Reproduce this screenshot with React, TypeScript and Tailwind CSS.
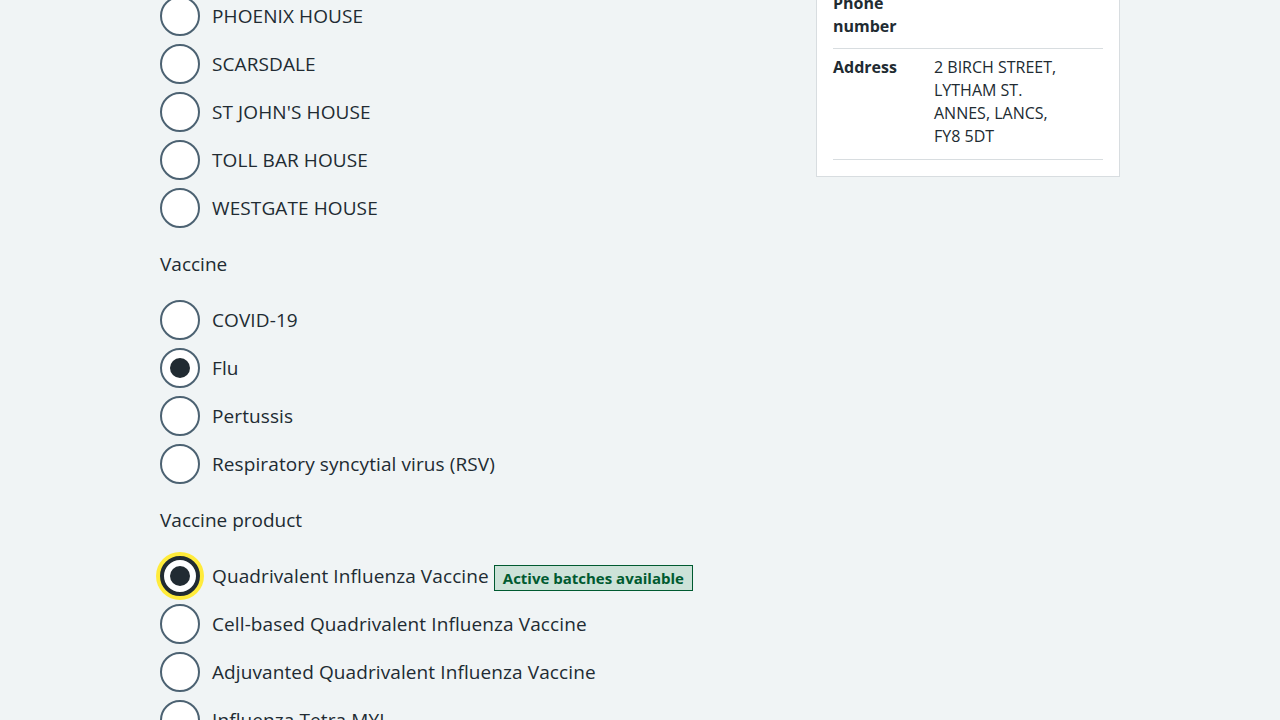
const sites = ['PHOENIX HOUSE', 'SCARSDALE', "ST JOHN'S HOUSE", 'TOLL BAR HOUSE', 'WESTGATE HOUSE'];
const vaccines = [
  { label: 'COVID-19', checked: false },
  { label: 'Flu', checked: true },
  { label: 'Pertussis', checked: false },
  { label: 'Respiratory syncytial virus (RSV)', checked: false },
];
const products = [
  'Quadrivalent Influenza Vaccine',
  'Cell-based Quadrivalent Influenza Vaccine',
  'Adjuvanted Quadrivalent Influenza Vaccine',
  'Influenza Tetra MYL',
];

function Radio({
  label,
  checked = false,
  focused = false,
  tag,
}: {
  label: string;
  checked?: boolean;
  focused?: boolean;
  tag?: string;
}) {
  return (
    <div className="flex items-center h-10 mb-2">
      <span
        className={
          'w-10 h-10 shrink-0 rounded-full bg-white flex items-center justify-center ' +
          (focused
            ? 'border-4 border-[#212b32] shadow-[0_0_0_4px_#ffeb3b]'
            : 'border-2 border-[#4c6272]')
        }
      >
        {checked && <span className="w-5 h-5 rounded-full bg-[#212b32]" />}
      </span>
      <span className="ml-3 text-[19px] leading-7 whitespace-nowrap tracking-[0.1px]">
        {label}
        {tag && (
          <span className="ml-[5px] inline-block align-[-1px] border border-[#005a30] bg-[#cce2d8] text-[#005a30] font-bold text-[15px] leading-4 tracking-normal px-2 pt-[4px] pb-[4px]">
            {tag}
          </span>
        )}
      </span>
    </div>
  );
}

function Legend({ children }: { children: string }) {
  return <div className="text-[19px] leading-7 mt-[22px] mb-[22px]">{children}</div>;
}

export default function App() {
  return (
    <div className="h-[720px] overflow-hidden bg-[#f0f4f5] text-[#212b32] font-['Open_Sans',sans-serif]">
      <div className="max-w-[960px] mx-auto flex gap-8">
        {/* Form column */}
        <div className="w-[624px] -mt-1">
          {sites.map((s) => (
            <Radio key={s} label={s} />
          ))}
          <Legend>Vaccine</Legend>
          {vaccines.map((v) => (
            <Radio key={v.label} label={v.label} checked={v.checked} />
          ))}
          <Legend>Vaccine product</Legend>
          {products.map((p, i) => (
            <Radio
              key={p}
              label={p}
              checked={i === 0}
              focused={i === 0}
              tag={i === 0 ? 'Active batches available' : undefined}
            />
          ))}
        </div>

        {/* Site details card */}
        <div className="w-[304px] self-start -mt-[18px] bg-white border border-[#d8dde0] px-4 pb-4">
          <dl className="text-[16px] leading-[23px]">
            <div className="flex border-b border-[#d8dde0] pt-[9px] pb-[10px]">
              <dt className="w-[101px] font-bold">
                Phone
                <br />
                number
              </dt>
              <dd className="w-[140px]" />
            </div>
            <div className="flex border-b border-[#d8dde0] pt-[7px] pb-[11px]">
              <dt className="w-[101px] font-bold">Address</dt>
              <dd className="w-[150px]">
                2 BIRCH STREET,
                <br />
                LYTHAM ST.
                <br />
                ANNES, LANCS,
                <br />
                FY8 5DT
              </dd>
            </div>
          </dl>
        </div>
      </div>
    </div>
  );
}
